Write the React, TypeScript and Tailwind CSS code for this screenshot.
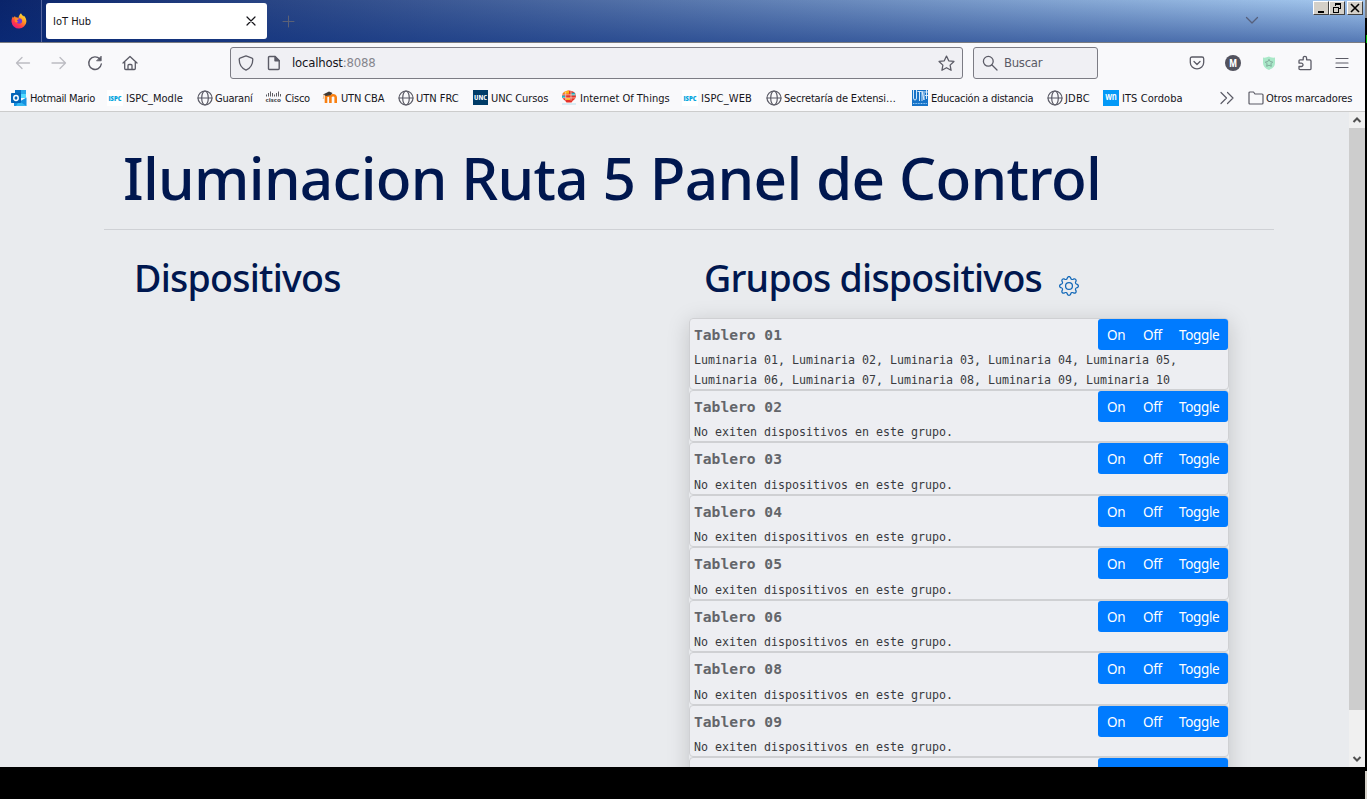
import React from "react";

const stroke = {
  fill: "none",
  stroke: "currentColor",
  strokeLinecap: "round" as const,
  strokeLinejoin: "round" as const,
};

function Firefox() {
  return (
    <svg width="16" height="16" viewBox="0 0 16 16">
      <defs>
        <linearGradient id="fx" x1="0.85" y1="0" x2="0.2" y2="1">
          <stop offset="0" stopColor="#fff13f" />
          <stop offset="0.4" stopColor="#ff9a1f" />
          <stop offset="0.7" stopColor="#ff3b47" />
          <stop offset="1" stopColor="#e31587" />
        </linearGradient>
      </defs>
      <path d="M10 .2c.6 1.400 1.700 2 2.500 3.300.2-.3.2-.6.2-.9 1.700 1.500 2.800 3.800 2.700 6.200A7.500 7.500 0 0 1 .5 9c-.1-2 .4-4.100 1.400-5.600l.5 1.300c.5-.8 1.100-1.500 1.700-1.800 0 .6.100 1 .4 1.400 1-.1 2.200.1 2.900.6C7.700 3.400 8.500 1.300 10 .2z" fill="url(#fx)" />
      <circle cx="8.300" cy="8" r="2.800" fill="#7139d8" />
      <path d="M4.300 5.200c1.200-.3 2.700 0 3.600.9-.6.700-1.300.9-2 1-.1.800.5 1.300 1.300 1.400-.7 1-2 1.200-3 .5-.5-1.200-.5-2.600.1-3.800z" fill="#ff8a26" />
    </svg>
  );
}

function Globe() {
  return (
    <svg width="16" height="16" viewBox="0 0 16 16" className="text-[#5b5b66]" {...stroke} strokeWidth="1.2">
      <circle cx="8" cy="8" r="7" />
      <ellipse cx="8" cy="8" rx="3.300" ry="7" />
      <path d="M1 8h14" />
    </svg>
  );
}

function Outlook() {
  return (
    <svg width="16" height="16" viewBox="0 0 16 16">
      <path d="M4 0h11v8H4z" fill="#28a8ea" />
      <path d="M4 0h6v4H4z" fill="#0a6fc2" />
      <path d="M10 4h5v4h-5z" fill="#50d9ff" />
      <path d="M3 16h12.500V7.500L9.500 11 3 13z" fill="#1490df" />
      <path d="M5 16h10.500L8 11z" fill="#35b8f1" />
      <rect x="0" y="3" width="10" height="10" rx="0.700" fill="#0364b8" />
      <ellipse cx="5" cy="8" rx="2.200" ry="2.400" fill="none" stroke="#fff" strokeWidth="1.500" />
    </svg>
  );
}

function Ispc() {
  return (
    <svg width="16" height="16" viewBox="0 0 16 16">
      <rect width="16" height="16" fill="#fff" />
      <text x="1.500" y="10.500" textLength="13" lengthAdjust="spacingAndGlyphs" fontFamily="Open Sans, sans-serif" fontWeight="800" fontSize="7" fill="#08a5dd">ISPC</text>
    </svg>
  );
}

function Cisco() {
  return (
    <svg width="17" height="16" viewBox="0 0 17 16">
      <path d="M1.500 4.500v2M3.500 3v3.500M5.500 1.500v5M7.500 3v3.500M9.500 4.500v2M11.500 3v3.500M13.500 1.500v5M15.500 4v2.500" stroke="#4b4b50" strokeWidth="0.900" />
      <text x="0.500" y="11.500" textLength="15.500" lengthAdjust="spacingAndGlyphs" fontFamily="Open Sans, sans-serif" fontWeight="700" fontSize="6" fill="#4b4b50">cisco</text>
    </svg>
  );
}

function Moodle() {
  return (
    <svg width="17" height="16" viewBox="0 0 17 16">
      <path d="M4 13V7.300c0-2.200 4.400-2.400 4.400 0V13M8.400 13V7.300c0-2.400 5.300-3 5.300.2V13" fill="none" stroke="#f98012" strokeWidth="2.600" />
      <path d="M1 4.500l6-3L10.500 3 8.500 5.300 4 6z" fill="#403b38" />
      <path d="M2 4.500L1.200 9" stroke="#f4ad6b" strokeWidth="0.800" />
    </svg>
  );
}

function Unc() {
  return (
    <svg width="15" height="15" viewBox="0 0 15 15">
      <rect width="15" height="15" fill="#003c68" />
      <text x="1" y="10" textLength="13" lengthAdjust="spacingAndGlyphs" fontFamily="Open Sans, sans-serif" fontWeight="700" fontSize="6.500" fill="#fff">UNC</text>
    </svg>
  );
}

function Things() {
  return (
    <svg width="16" height="16" viewBox="0 0 16 16">
      <ellipse cx="8" cy="6" rx="7" ry="5.500" fill="#e63329" />
      <path d="M2 3.800Q4 .5 8 .5v3.300z" fill="#fbb615" />
      <path d="M1 5.500h3V8H1zM10.500 2.800h3.200l.8 2.700h-4z" fill="#19b5c9" />
      <path d="M5 8h4v2H5z" fill="#ffb31a" />
      <path d="M1 4.800h14M1.500 7.900h13M4.700 1.500v9M10 1v10.500" stroke="#f8dcc8" strokeWidth="0.700" />
      <path d="M4 10.500h8l-1.500 2H5.500z" fill="#e63329" />
      <path d="M1 14h14" stroke="#b5dfee" />
    </svg>
  );
}

function Utn() {
  return (
    <svg width="16" height="16" viewBox="0 0 16 16">
      <rect width="16" height="16" fill="#1673c8" />
      <path d="M1.500 0v8q0 2 1.500 2t1.500-2V0M5.500 1.500h4M7.500 1.500V11M10 11V1l2 9V1M13 2h3M13 5.500h3M14.500 0v9" fill="none" stroke="#eaf5ff" strokeWidth="0.900" />
      <path d="M1 13.500h14" stroke="#9acdf5" strokeDasharray="1 .6" />
    </svg>
  );
}

function Wn() {
  return (
    <span className="flex h-4 w-4 items-center justify-center bg-[#0399f7] pb-[3px] font-['Open_Sans',sans-serif] text-[10.5px] font-semibold leading-none tracking-[-0.2px] text-white">
      wn
    </span>
  );
}

const bookmarks = [
  { icon: <Outlook />, label: "Hotmail Mario", box: "w-[96px]", text: "ml-[3px] tracking-[-0.33px]" },
  { icon: <Ispc />, label: "ISPC_Modle", box: "w-[90px]", text: "ml-[3px]" },
  { icon: <Globe />, label: "Guaraní", box: "w-[68px]", text: "ml-[2px] tracking-[-0.25px]" },
  { icon: <Cisco />, label: "Cisco", box: "w-[57px]", text: "ml-[3px] tracking-[-0.3px]" },
  { icon: <Moodle />, label: "UTN CBA", box: "w-[76px]", text: "ml-[2px] tracking-[-0.15px]" },
  { icon: <Globe />, label: "UTN FRC", box: "w-[75px]", text: "ml-[2px]" },
  { icon: <Unc />, label: "UNC Cursos", box: "w-[88px]", text: "ml-[3px] tracking-[-0.1px]" },
  { icon: <Things />, label: "Internet Of Things", box: "w-[121px]", text: "ml-[3px]" },
  { icon: <Ispc />, label: "ISPC_WEB", box: "w-[84px]", text: "ml-[3px] tracking-[0.15px]" },
  { icon: <Globe />, label: "Secretaría de Extensi…", box: "w-[146px]", text: "ml-[2px] tracking-[-0.17px]" },
  { icon: <Utn />, label: "Educación a distancia", box: "w-[135px]", text: "ml-[3px] tracking-[-0.27px]" },
  { icon: <Globe />, label: "JDBC", box: "w-[56px]", text: "ml-[2px] tracking-[0.2px]" },
  { icon: <Wn />, label: "ITS Cordoba", box: "w-[116px]", text: "ml-[3px] tracking-[0.07px]" },
];

function WindowButton({ children }: { children: React.ReactNode }) {
  return (
    <span className="flex h-[14px] w-4 items-center justify-center border border-t-white border-l-white border-r-[#404040] border-b-[#404040] bg-[#d4d0c8] text-black">
      {children}
    </span>
  );
}

function TabStrip() {
  return (
    <div className="flex h-[43px] shrink-0 border-b border-[#7b7c80] bg-[linear-gradient(to_right,#0a246a_0%,#a6caf0_100%)]">
      <div className="flex w-full bg-[linear-gradient(to_bottom,rgba(10,36,106,0)_0%,rgba(10,46,126,0.52)_100%)]">
        <div className="flex w-[42px] items-center justify-center border-r border-[#5566a0] pr-1">
          <Firefox />
        </div>
        <div className="mt-[3px] ml-1 flex h-9 w-[221px] items-center justify-between rounded-[3px] bg-white pr-[11px] pl-[7px] text-[11px] text-[#15141a]">
          <span className="pt-[2px]">IoT Hub</span>
          <svg width="10" height="10" viewBox="0 0 10 10" {...stroke} strokeWidth="1.200">
            <path d="M1 1l8 8M9 1l-8 8" />
          </svg>
        </div>
        <svg width="13" height="13" viewBox="0 0 13 13" className="mt-[15px] ml-[15px] text-[#5c6176]" {...stroke} strokeWidth="1">
          <path d="M6.500 1v11M1 6.500h11" />
        </svg>
        <svg width="14" height="9" viewBox="0 0 14 9" className="mt-4 ml-auto text-[#56607c]" {...stroke} strokeWidth="1.300">
          <path d="M1.500 1.500L7 7l5.500-5.500" />
        </svg>
        <div className="mt-px mr-[2px] ml-[54px] flex">
          <WindowButton>
            <svg width="12" height="10" viewBox="0 0 12 10"><path d="M3 8h6v2H3z" /></svg>
          </WindowButton>
          <WindowButton>
            <svg width="12" height="10" viewBox="0 0 12 10" fill="none" stroke="#000" shapeRendering="crispEdges">
              <path d="M4.500 3V.5h5v5H8M4 1.500h6M2.500 4v5.500h5V4M2 4.500h6" />
            </svg>
          </WindowButton>
          <span className="w-[2px]" />
          <WindowButton>
            <svg width="12" height="10" viewBox="0 0 12 10" stroke="#000" strokeWidth="1.600"><path d="M2 1l8 8M10 1l-8 8" /></svg>
          </WindowButton>
        </div>
      </div>
    </div>
  );
}

function NavBar() {
  return (
    <div className="flex h-[41px] shrink-0 items-center pb-px text-[#5b5b66]">
      <svg width="16" height="16" viewBox="0 0 16 16" className="ml-[15px] text-[#bcbcc2]" {...stroke} strokeWidth="1.300">
        <path d="M14.500 8H1.500M7 2.500L1.500 8 7 13.500" />
      </svg>
      <svg width="16" height="16" viewBox="0 0 16 16" className="ml-5 text-[#bcbcc2]" {...stroke} strokeWidth="1.300">
        <path d="M1 8h13.500M9 2.500L14.500 8 9 13.500" />
      </svg>
      <svg width="16" height="16" viewBox="0 0 16 16" className="ml-5" {...stroke} strokeWidth="1.400">
        <path d="M12.800 4A6.300 6.300 0 1 0 14.300 9" />
        <path d="M14.200 1.500v4.300H9.900z" fill="currentColor" strokeWidth="0.800" />
      </svg>
      <svg width="16" height="16" viewBox="0 0 16 16" className="ml-[19px]" {...stroke} strokeWidth="1.300">
        <path d="M1 8l7-6.500L15 8M2.700 7v6.500q0 1 1 1h8.600q1 0 1-1V7M6 14.500V10.500q0-1 1-1h2q1 0 1 1v4" />
      </svg>
      <div className="ml-[92px] flex h-8 w-[733px] items-center rounded-[3px] border border-[#7c7c84] bg-[#f0f0f4] pr-[7px] pl-[7px]">
        <svg width="16" height="16" viewBox="0 0 16 16" {...stroke} strokeWidth="1.300">
          <path d="M8 .9l6 2.200q.8.300.8 1.100c0 4.800-2.500 9-6.800 10.900C3.700 13.200 1.200 9 1.200 4.200q0-.8.800-1.100z" />
        </svg>
        <svg width="16" height="16" viewBox="0 0 16 16" className="ml-3" {...stroke} strokeWidth="1.400">
          <path d="M3.500 1.500H9l4.200 4.200v7.800q0 1-1 1H3.500q-1 0-1-1v-11q0-1 1-1z" />
          <path d="M9 1.500v4.200h4.200z" fill="currentColor" />
        </svg>
        <span className="ml-[10px] text-[13px] tracking-[-0.2px] text-[#15141a]">
          localhost<span className="text-[#85858c]">:8088</span>
        </span>
        <svg width="17" height="17" viewBox="0 0 16 16" className="ml-auto" {...stroke} strokeWidth="1.200">
          <path d="M8 1l2.100 4.500 4.900.6-3.600 3.400.9 4.900L8 12l-4.300 2.400.9-4.900L1 6.100l4.900-.6z" />
        </svg>
      </div>
      <div className="ml-[10px] flex h-8 w-[125px] items-center rounded-[3px] border border-[#7c7c84] bg-[#f0f0f4] pl-2">
        <svg width="16" height="16" viewBox="0 0 16 16" {...stroke} strokeWidth="1.300">
          <circle cx="6.300" cy="6.300" r="4.900" />
          <path d="M10 10l5 5" />
        </svg>
        <span className="ml-[6px] text-[13px] tracking-[-0.3px] text-[#5b5b66]">Buscar</span>
      </div>
      <svg width="16" height="16" viewBox="0 0 16 16" className="ml-[91px]" {...stroke} strokeWidth="1.300">
        <path d="M3 2h10q1.700 0 1.700 1.700V7.500a6.700 6.300 0 0 1-13.400 0V3.700Q1.300 2 3 2z" />
        <path d="M5 6.500l3 3 3-3" />
      </svg>
      <span className="ml-5 flex h-4 w-4 items-center justify-center rounded-full bg-[#52525e] font-['Open_Sans',sans-serif] text-[10px] font-bold leading-none text-white">
        M
      </span>
      <svg width="14" height="14" viewBox="0 0 14 14" className="ml-[21px]">
        <path d="M1 1.500Q4 2 7 .5q3 1.500 6 1V7q0 4.500-6 7-6-2.500-6-7z" fill="#a9e8c8" />
        <path d="M7 3.300l1.200 2.300 2.500.4-1.800 1.800.4 2.500L7 9.200l-2.300 1.100.4-2.500L3.300 6l2.500-.4z" fill="none" stroke="#7da496" strokeWidth="0.900" />
      </svg>
      <svg width="16" height="16" viewBox="0 0 16 16" className="ml-[21px]" {...stroke} strokeWidth="1.300">
        <path d="M2 7V5.800q0-1 1-1h3.200V3a1.700 1.700 0 0 1 3.400 0v1.800h3.200q1.200 0 1.200 1.200v7.500q0 1.200-1.200 1.200H3.200q-1.200 0-1.200-1.200v-2h2.300a1.700 1.700 0 0 0 0-3.400H2z" />
      </svg>
      <svg width="14" height="12" viewBox="0 0 14 12" className="ml-[22px]" {...stroke} strokeWidth="1.200">
        <path d="M1 1.500h12M1 6h12M1 10.500h12" />
      </svg>
    </div>
  );
}

function BookmarksBar() {
  return (
    <div className="flex h-7 shrink-0 items-center border-b border-[#cccccc] pl-[11px] text-[11px] whitespace-nowrap text-[#15141a]">
      {bookmarks.map((b) => (
        <div key={b.label} className={`flex shrink-0 items-center ${b.box}`}>
          <span className="shrink-0">{b.icon}</span>
          <span className={`${b.text} pt-[2px] leading-[14px]`}>{b.label}</span>
        </div>
      ))}
      <svg width="14" height="14" viewBox="0 0 14 14" className="ml-[1px] text-[#5b5b66]" {...stroke} strokeWidth="1.200">
        <path d="M1 1.500L6.500 7 1 12.500M7.500 1.500L13 7l-5.500 5.500" />
      </svg>
      <svg width="16" height="14" viewBox="0 0 16 14" className="ml-[14px] text-[#5b5b66]" {...stroke} strokeWidth="1.200">
        <path d="M1 2q0-1 1-1h3.500l1.500 2H14q1 0 1 1v8q0 1-1 1H2q-1 0-1-1z" />
      </svg>
      <span className="ml-[2px] pt-[2px] leading-[14px] tracking-[-0.12px]">Otros marcadores</span>
    </div>
  );
}

const EMPTY = "No exiten dispositivos en este grupo.";

const groups = [
  { name: "Tablero 01", devices: "Luminaria 01, Luminaria 02, Luminaria 03, Luminaria 04, Luminaria 05, Luminaria 06, Luminaria 07, Luminaria 08, Luminaria 09, Luminaria 10" },
  { name: "Tablero 02", devices: EMPTY },
  { name: "Tablero 03", devices: EMPTY },
  { name: "Tablero 04", devices: EMPTY },
  { name: "Tablero 05", devices: EMPTY },
  { name: "Tablero 06", devices: EMPTY },
  { name: "Tablero 08", devices: EMPTY },
  { name: "Tablero 09", devices: EMPTY },
];

const cardFrame = "shrink-0 rounded-[4px] border border-[#cfd0d3] bg-[#edeef2]";
const buttonBar = "flex h-[31px] w-[130px] rounded-[3px] bg-[#007bff]";

function GroupCard({ name, devices }: { name: string; devices: string }) {
  return (
    <div
      className={`${cardFrame} font-['DejaVu_Sans_Mono',monospace] ${
        devices === EMPTY ? "h-[52.5px]" : "h-[71.9px]"
      }`}
    >
      <div className="flex h-[31px] justify-between">
        <h3 className="pl-1 text-[14.62px] leading-[32px] font-bold text-[#63656a]">{name}</h3>
        <div className={`${buttonBar} items-center pt-[2px] pl-[9px] font-['Noto_Sans',sans-serif] text-[13.5px] leading-[29px] tracking-[-0.35px] text-white`}>
          <button className="w-9 text-left">On</button>
          <button className="w-9 text-left">Off</button>
          <button className="text-left">Toggle</button>
        </div>
      </div>
      <p className="pt-[0.3px] pr-8 pl-1 text-[11.63px] leading-5 text-[#383a40]">{devices}</p>
    </div>
  );
}

function Gear() {
  return (
    <svg width="20" height="20" viewBox="0 0 16 16" className="text-[#1268b8]" fill="currentColor">
      <path d="M8 4.754a3.246 3.246 0 1 0 0 6.492 3.246 3.246 0 0 0 0-6.492zM5.754 8a2.246 2.246 0 1 1 4.492 0 2.246 2.246 0 0 1-4.492 0z" />
      <path d="M9.796 1.343c-.527-1.790-3.065-1.790-3.592 0l-.094.319a.873.873 0 0 1-1.255.520l-.292-.160c-1.640-.892-3.433.902-2.540 2.541l.159.292a.873.873 0 0 1-.520 1.255l-.319.094c-1.790.527-1.790 3.065 0 3.592l.319.094a.873.873 0 0 1 .520 1.255l-.160.292c-.892 1.640.901 3.434 2.541 2.540l.292-.159a.873.873 0 0 1 1.255.520l.094.319c.527 1.790 3.065 1.790 3.592 0l.094-.319a.873.873 0 0 1 1.255-.520l.292.160c1.640.893 3.434-.902 2.540-2.541l-.159-.292a.873.873 0 0 1 .520-1.255l.319-.094c1.790-.527 1.790-3.065 0-3.592l-.319-.094a.873.873 0 0 1-.520-1.255l.160-.292c.893-1.640-.902-3.433-2.541-2.540l-.292.159a.873.873 0 0 1-1.255-.520l-.094-.319zm-2.633.283c.246-.835 1.428-.835 1.674 0l.094.319a1.873 1.873 0 0 0 2.693 1.115l.291-.160c.764-.415 1.600.420 1.184 1.185l-.159.292a1.873 1.873 0 0 0 1.116 2.692l.318.094c.835.246.835 1.428 0 1.674l-.319.094a1.873 1.873 0 0 0-1.115 2.693l.160.291c.415.764-.420 1.600-1.185 1.184l-.291-.159a1.873 1.873 0 0 0-2.693 1.116l-.094.318c-.246.835-1.428.835-1.674 0l-.094-.319a1.873 1.873 0 0 0-2.692-1.115l-.292.160c-.764.415-1.600-.420-1.184-1.185l.159-.291A1.873 1.873 0 0 0 1.945 8.930l-.319-.094c-.835-.246-.835-1.428 0-1.674l.319-.094A1.873 1.873 0 0 0 3.060 4.377l-.160-.292c-.415-.764.420-1.600 1.185-1.184l.292.159a1.873 1.873 0 0 0 2.692-1.115l.094-.319z" />
    </svg>
  );
}

function Page() {
  return (
    <main className="h-full w-[1349px] overflow-hidden bg-[#e9ebee] font-['Noto_Sans',sans-serif] text-[#00174f]">
      <header className="ml-[104px] h-[118px] w-[1170px] border-b border-[#cfd1d5]">
        <h1 className="pt-[21px] pl-[19px] text-[58.5px] leading-[88px] font-medium tracking-[-0.7px] whitespace-nowrap">
          Iluminacion Ruta 5 Panel de Control
        </h1>
      </header>
      <div className="ml-[104px] flex">
        <section className="w-[585px] pt-[19px] pl-[30px]">
          <h2 className="text-[37.5px] leading-[58px] font-medium tracking-[-0.75px] whitespace-nowrap">Dispositivos</h2>
        </section>
        <section className="w-[540px] pt-[19px]">
          <div className="flex h-[69px] pl-[15px]">
            <h2 className="w-[355px] text-[37.5px] leading-[58px] font-medium tracking-[-0.75px] whitespace-nowrap">Grupos dispositivos</h2>
            <span className="pt-[27px]"><Gear /></span>
          </div>
          <div className="flex flex-col rounded-[4px] shadow-[0_4px_22px_rgba(0,0,0,0.17)]">
            {groups.map((g) => (
              <GroupCard key={g.name} {...g} />
            ))}
            <div className={`${cardFrame} flex h-[52.5px] justify-end`}>
              <div className={buttonBar} />
            </div>
          </div>
        </section>
      </div>
    </main>
  );
}

function Scrollbar() {
  return (
    <div className="flex w-4 flex-col items-center bg-[#f0f0f0] text-[#505050]">
      <svg width="16" height="16" viewBox="0 0 16 16" {...stroke} strokeLinecap="butt" strokeLinejoin="miter" strokeWidth="2">
        <path d="M4.500 10L8 6.500l3.500 3.500" />
      </svg>
      <div className="h-[582px] w-4 bg-[#cdcdcd]" />
      <svg width="16" height="16" viewBox="0 0 16 16" className="mt-auto" {...stroke} strokeLinecap="butt" strokeLinejoin="miter" strokeWidth="2">
        <path d="M4.500 6L8 9.500 11.500 6" />
      </svg>
    </div>
  );
}

export default function App() {
  return (
    <div className="flex h-[799px] w-[1367px] overflow-hidden bg-black">
      <div className="flex w-[1365px] flex-col">
        <div className="flex h-[767px] flex-col bg-[#f9f9fb] font-['DejaVu_Sans_Condensed','DejaVu_Sans',sans-serif] [font-stretch:condensed]">
          <TabStrip />
          <NavBar />
          <BookmarksBar />
          <div className="flex h-[655px] shrink-0">
            <Page />
            <Scrollbar />
          </div>
        </div>
      </div>
      <div className="flex w-[2px] flex-col">
        <div className="h-[18px] bg-[#808080]" />
        <div className="mt-[17px] ml-px h-2 bg-[#00b400]" />
        <div className="mt-auto h-7 bg-[#d4d0c8]" />
      </div>
    </div>
  );
}
